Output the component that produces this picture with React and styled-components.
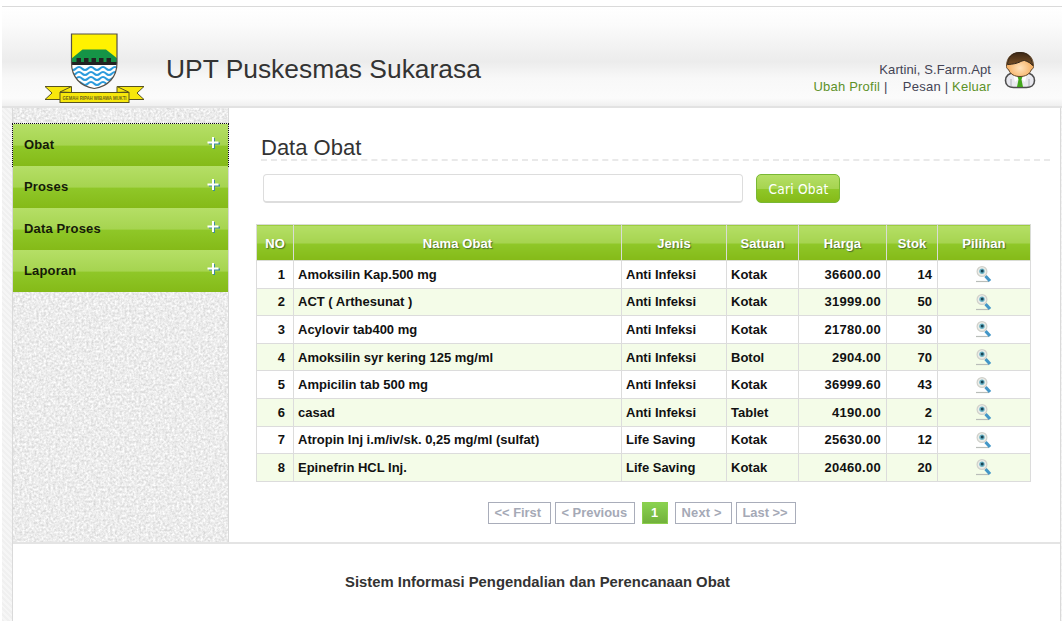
import React from "react";
import styled, { createGlobalStyle } from "styled-components";

const Global = createGlobalStyle`
  * { box-sizing: border-box; }
  body {
    margin: 0;
    background: #fff;
    font-family: "Liberation Sans", Arial, sans-serif;
    color: #333;
    overflow: hidden;
  }
`;

const glossy = `linear-gradient(#b5df66 0%, #a6d450 50%, #8fc728 53%, #85ba18 100%)`;

const Page = styled.div`
  width: 1062px;
  height: 632px;
  padding: 6px 0 11px 2px;
  display: flex;
  flex-direction: column;
`;

const Header = styled.header`
  flex: 0 0 102px;
  display: flex;
  align-items: flex-start;
  border-top: 1px solid #dadada;
  border-bottom: 2px solid #e2e2e2;
  background: linear-gradient(#fff 0%, #fbfbfb 18%, #ececec 55%, #f8f8f8 72%, #fbfbfb 92%, #efefef 100%);
`;

const LogoBox = styled.div`
  width: 164px;
  padding: 25px 0 0 42px;
  svg { display: block; }
`;

const SiteTitle = styled.h1`
  flex: 1;
  margin: 46px 0 0;
  font-size: 26.4px;
  line-height: 32px;
  font-weight: 400;
  color: #333;
`;

const Account = styled.div`
  margin-top: 55px;
  font-size: 13px;
  letter-spacing: 0.1px;
  line-height: 16.5px;
  text-align: right;
  color: #445;
  white-space: pre;
`;

const AccountLinks = styled.div`
  letter-spacing: 0.22px;
`;

const AccountLink = styled.a`
  color: #5d9128;
`;

const AvatarBox = styled.div`
  padding: 44px 26px 0 13px;
  svg { display: block; }
`;

const Body = styled.div`
  flex: 1;
  display: flex;
  padding: 0 1px 0 10px;
  background: repeating-linear-gradient(45deg, #f0f0f0 0 2px, #f6f6f6 2px 4px);
`;

const Sheet = styled.div`
  flex: 1;
  min-width: 0;
  display: flex;
  flex-direction: column;
  background: #fff;
  border: solid #dadada;
  border-width: 0 1px;
`;

const Columns = styled.div`
  height: 436px;
  display: flex;
  border-bottom: 2px solid #e4e4e4;
`;

const Sidebar = styled.aside`
  position: relative;
  flex: 0 0 216px;
  padding-top: 16px;
  border-right: 1px solid #d9d9d9;
  background: #ececec;
`;

const Texture = styled.svg`
  position: absolute;
  inset: 0;
  width: 100%;
  height: 100%;
`;

const Menu = styled.nav`
  position: relative;
  display: flex;
  flex-direction: column;
`;

const MenuItem = styled.a`
  height: 42px;
  display: flex;
  justify-content: space-between;
  padding: 0 8px 0 11px;
  font-size: 13px;
  letter-spacing: 0.15px;
  font-weight: 700;
  line-height: 42px;
  color: #151a08;
  background: ${glossy};
  outline: ${(p) => (p.$focused ? "1px dotted #111" : "none")};
  svg { margin-top: 12px; }
`;

const Content = styled.main`
  flex: 1;
  min-width: 0;
  padding: 24px 10px 0 27px;
`;

const Heading = styled.h2`
  margin: 0 0 13px 5px;
  height: 29px;
  font-size: 22px;
  line-height: 32px;
  font-weight: 400;
  color: #333;
  border-bottom: 2px dashed #e9e9e9;
`;

const SearchForm = styled.form`
  display: flex;
  gap: 13px;
  padding-left: 7px;
  margin-bottom: 21px;
`;

const SearchInput = styled.input`
  width: 480px;
  height: 29px;
  border: 1px solid #ddd;
  border-bottom-width: 2px;
  border-radius: 4px;
  background: #fff;
`;

const SearchButton = styled.button`
  width: 84px;
  height: 29px;
  padding: 0 0 0 1px;
  border: 1px solid #79b834;
  border-radius: 5px;
  background: ${glossy};
  color: #fff;
  font: 13.6px "DejaVu Sans Condensed", "DejaVu Sans", sans-serif;
  font-stretch: condensed;
  letter-spacing: 0.2px;
`;

const Table = styled.table`
  width: 775px;
  table-layout: fixed;
  border-collapse: collapse;
  font-size: 13px;
  font-weight: 700;
  color: #111;
`;

const Row = styled.tr`
  background: ${(p) => (p.$even ? "#f4fce8" : "#fff")};
`;

const Th = styled.th`
  height: 36px;
  padding: 2px 0 0;
  border: 1px solid #d9dcd5;
  background: ${glossy};
  color: #fff;
  letter-spacing: 0.1px;
  text-shadow: 1px 1px 1px #4a6d2c;
`;

const Td = styled.td`
  height: 27.6px;
  padding: 0 ${(p) => p.$pad || 5}px 0 4px;
  border: 1px solid #dcdcdc;
  text-align: ${(p) => p.$align || "left"};
  letter-spacing: ${(p) => p.$spacing || 0}px;
  white-space: nowrap;
  svg { display: block; margin: 0 auto; }
`;

const Pager = styled.div`
  display: flex;
  justify-content: center;
  gap: 4px;
  margin-top: 20px;
  width: 771px;
`;

const PageLink = styled.a`
  width: ${(p) => p.$w}px;
  height: 22px;
  padding-left: 6px;
  border: 1px solid #a9adba;
  font-size: 12.9px;
  letter-spacing: ${(p) => p.$spacing || 0}px;
  font-weight: 700;
  line-height: 20px;
  white-space: nowrap;
  color: #a5a9b6;
`;

const CurrentPage = styled.span`
  width: 26px;
  height: 22px;
  margin: 0 3px;
  border: 1px solid #8ccf4d;
  background: linear-gradient(#8ad250, #72b13b);
  color: #fff;
  font-size: 12.8px;
  font-weight: 700;
  line-height: 20px;
  text-align: center;
`;

const Footer = styled.footer`
  padding: 28px 0 0 2px;
  text-align: center;
  font-size: 14.83px;
  line-height: 20px;
  font-weight: 700;
  color: #333;
`;

const Logo = () => (
  <svg width="101" height="72" viewBox="0 0 101 72">
    <defs>
      <clipPath id="shield">
        <path d="M27.5 2H73v29c0 14-9 23.500-22.700 25.500C36.500 54.500 27.500 45 27.500 31z" />
      </clipPath>
    </defs>
    <g clipPath="url(#shield)">
      <rect x="27" y="1" width="47" height="56" fill="#fff200" />
      <path d="M27 27 38.500 17.500H62L74 27v5H27z" fill="#159447" />
      <rect x="27" y="32" width="47" height="26" fill="#fff" />
      <path d="M27 30h5.500v-4h4.500v4h3v-4h4.500v4h3v-4h4.500v4h3v-4h4.500v4h3v-4h4.500v4H74v3H27z" fill="#222" />
      {[36.5, 41.5, 46.5, 51.5].map((y) => (
        <path
          key={y}
          d={`M26 ${y}q3 3 6 0t6 0 6 0 6 0 6 0 6 0 6 0 6 0`}
          fill="none"
          stroke="#2c9bdc"
          strokeWidth="2"
        />
      ))}
    </g>
    <path d="M27.500 2H73v29c0 14-9 23.500-22.700 25.500C36.500 54.500 27.500 45 27.500 31z" fill="none" stroke="#55504a" strokeWidth="1.200" />
    <g fill="#f7e70c" stroke="#58531f" strokeWidth="1">
      <path d="M1 54.500h26l-8 7v6H1l7-6.500z" />
      <path d="M100 54.500H73l9 7v6h18l-7-6.500z" />
      <path d="M16 60 27.500 54.500v6zM84.500 60 73 54.500v6z" />
      <rect x="16" y="60.500" width="69" height="10" />
    </g>
    <text x="18.500" y="67.600" fontSize="5.400" fontWeight="700" textLength="64" lengthAdjust="spacingAndGlyphs" fill="#6f6618">
      GEMAH RIPAH WIBAWA MUKTI
    </text>
  </svg>
);

const Avatar = () => (
  <svg width="32" height="38" viewBox="0 0 32 38">
    <defs>
      <radialGradient id="face" cx="50%" cy="65%">
        <stop offset="0" stopColor="#ffe3bd" />
        <stop offset="1" stopColor="#f5ad5e" />
      </radialGradient>
      <linearGradient id="hair" x1="0" y1="0" x2="0" y2="1">
        <stop offset="0" stopColor="#3d2714" />
        <stop offset="1" stopColor="#7b5227" />
      </linearGradient>
    </defs>
    <path d="M1.500 29.500c0-5 4-7.500 8-7.500h13c4 0 8 2.500 8 7.500 0 5-4 7-8 7h-13c-4 0-8-2-8-7z" fill="#e9e9ef" stroke="#4d4d4d" strokeWidth="1.600" />
    <path d="M7 28v7M25 28v7" stroke="#aeb0b8" />
    <path d="m9 23 7 4 7-4-2 8-5-4-5 4z" fill="#fff" />
    <path d="M13.500 25.500h5l-1 3 1.500 7.500h-6l1.500-7.500z" fill="#42a51c" />
    <path d="M2.500 15.500C2.500 6 8 1.500 16 1.500S29.500 6 29.500 15.500c0 2-1 2.500-2 3-2 5-6 7-11.500 7S6.500 23.500 4.500 18.500c-1-.5-2-1-2-3z" fill="url(#face)" stroke="#5d4327" />
    <path d="M3.500 13.500C4 6 8.500 1.500 16 1.500S28 6 28.500 14.500c-1.500-2.500-5-4-8-5-4 0-5 3.500-17 4z" fill="url(#hair)" stroke="#33261a" />
  </svg>
);

const Plus = () => (
  <svg width="13" height="14" viewBox="0 0 13 14">
    <path d="M7 2v11M2 7.500h11" stroke="#3d8c9c" strokeWidth="2" />
    <path d="M6 1v11M0.500 6.500h11" stroke="#fff" strokeWidth="2" />
  </svg>
);

const Magnifier = () => (
  <svg width="17" height="18" viewBox="0 0 17 18">
    <path d="M1 16.500h13" stroke="#b9bdb9" strokeWidth="1.200" />
    <path d="m10.500 11 4.500 5" stroke="#4497c7" strokeWidth="3.200" />
    <circle cx="7" cy="6.500" r="4.900" fill="#ecede8" stroke="#d0d1cb" strokeWidth="1.200" />
    <circle cx="7" cy="6.200" r="2.700" fill="#6db5c8" />
    <circle cx="7.200" cy="6" r="1.500" fill="#174556" />
  </svg>
);

const menu = ["Obat", "Proses", "Data Proses", "Laporan"];
const columns = [
  ["NO", 37],
  ["Nama Obat", 328],
  ["Jenis", 105],
  ["Satuan", 72],
  ["Harga", 88],
  ["Stok", 51],
  ["Pilihan", 93],
];
const medicines = [
  ["Amoksilin Kap.500 mg", "Anti Infeksi", "Kotak", "36600.00", 14],
  ["ACT ( Arthesunat )", "Anti Infeksi", "Kotak", "31999.00", 50],
  ["Acylovir tab400 mg", "Anti Infeksi", "Kotak", "21780.00", 30],
  ["Amoksilin syr kering 125 mg/ml", "Anti Infeksi", "Botol", "2904.00", 70],
  ["Ampicilin tab 500 mg", "Anti Infeksi", "Kotak", "36999.60", 43],
  ["casad", "Anti Infeksi", "Tablet", "4190.00", 2],
  ["Atropin Inj i.m/iv/sk. 0,25 mg/ml (sulfat)", "Life Saving", "Kotak", "25630.00", 12],
  ["Epinefrin HCL Inj.", "Life Saving", "Kotak", "20460.00", 20],
];

export default function App() {
  return (
    <>
      <Global />
      <Page>
        <Header>
          <LogoBox><Logo /></LogoBox>
          <SiteTitle>UPT Puskesmas Sukarasa</SiteTitle>
          <Account>
            <div>Kartini, S.Farm.Apt</div>
            <AccountLinks>
              <AccountLink>Ubah Profil</AccountLink>{" |    Pesan | "}
              <AccountLink>Keluar</AccountLink>
            </AccountLinks>
          </Account>
          <AvatarBox><Avatar /></AvatarBox>
        </Header>
        <Body>
          <Sheet>
            <Columns>
              <Sidebar>
                <Texture>
                  <filter id="grain" x="0" y="0" width="100%" height="100%" colorInterpolationFilters="sRGB">
                    <feTurbulence type="fractalNoise" baseFrequency="0.42" numOctaves="2" seed="4" />
                    <feColorMatrix values="0.26 0 0 0 0.795  0.26 0 0 0 0.795  0.26 0 0 0 0.795  0 0 0 0 1" />
                  </filter>
                  <rect width="100%" height="100%" filter="url(#grain)" />
                </Texture>
                <Menu>
                  {menu.map((label, i) => (
                    <MenuItem key={label} $focused={i === 0}>
                      {label}
                      <Plus />
                    </MenuItem>
                  ))}
                </Menu>
              </Sidebar>
              <Content>
                <Heading>Data Obat</Heading>
                <SearchForm>
                  <SearchInput />
                  <SearchButton type="button">Cari Obat</SearchButton>
                </SearchForm>
                <Table>
                  <colgroup>
                    {columns.map(([name, w]) => <col key={name} width={w} />)}
                  </colgroup>
                  <thead>
                    <tr>{columns.map(([name]) => <Th key={name}>{name}</Th>)}</tr>
                  </thead>
                  <tbody>
                    {medicines.map(([name, kind, unit, price, stock], i) => (
                      <Row key={name} $even={i % 2 === 1}>
                        <Td $align="right" $pad={8}>{i + 1}</Td>
                        <Td>{name}</Td>
                        <Td>{kind}</Td>
                        <Td>{unit}</Td>
                        <Td $align="right" $spacing={0.3}>{price}</Td>
                        <Td $align="right">{stock}</Td>
                        <Td><Magnifier /></Td>
                      </Row>
                    ))}
                  </tbody>
                </Table>
                <Pager>
                  <PageLink $w={63}>&lt;&lt; First</PageLink>
                  <PageLink $w={80}>&lt; Previous</PageLink>
                  <CurrentPage>1</CurrentPage>
                  <PageLink $w={57} $spacing={0.2}>Next &gt;</PageLink>
                  <PageLink $w={60}>Last &gt;&gt;</PageLink>
                </Pager>
              </Content>
            </Columns>
            <Footer>Sistem Informasi Pengendalian dan Perencanaan Obat</Footer>
          </Sheet>
        </Body>
      </Page>
    </>
  );
}
